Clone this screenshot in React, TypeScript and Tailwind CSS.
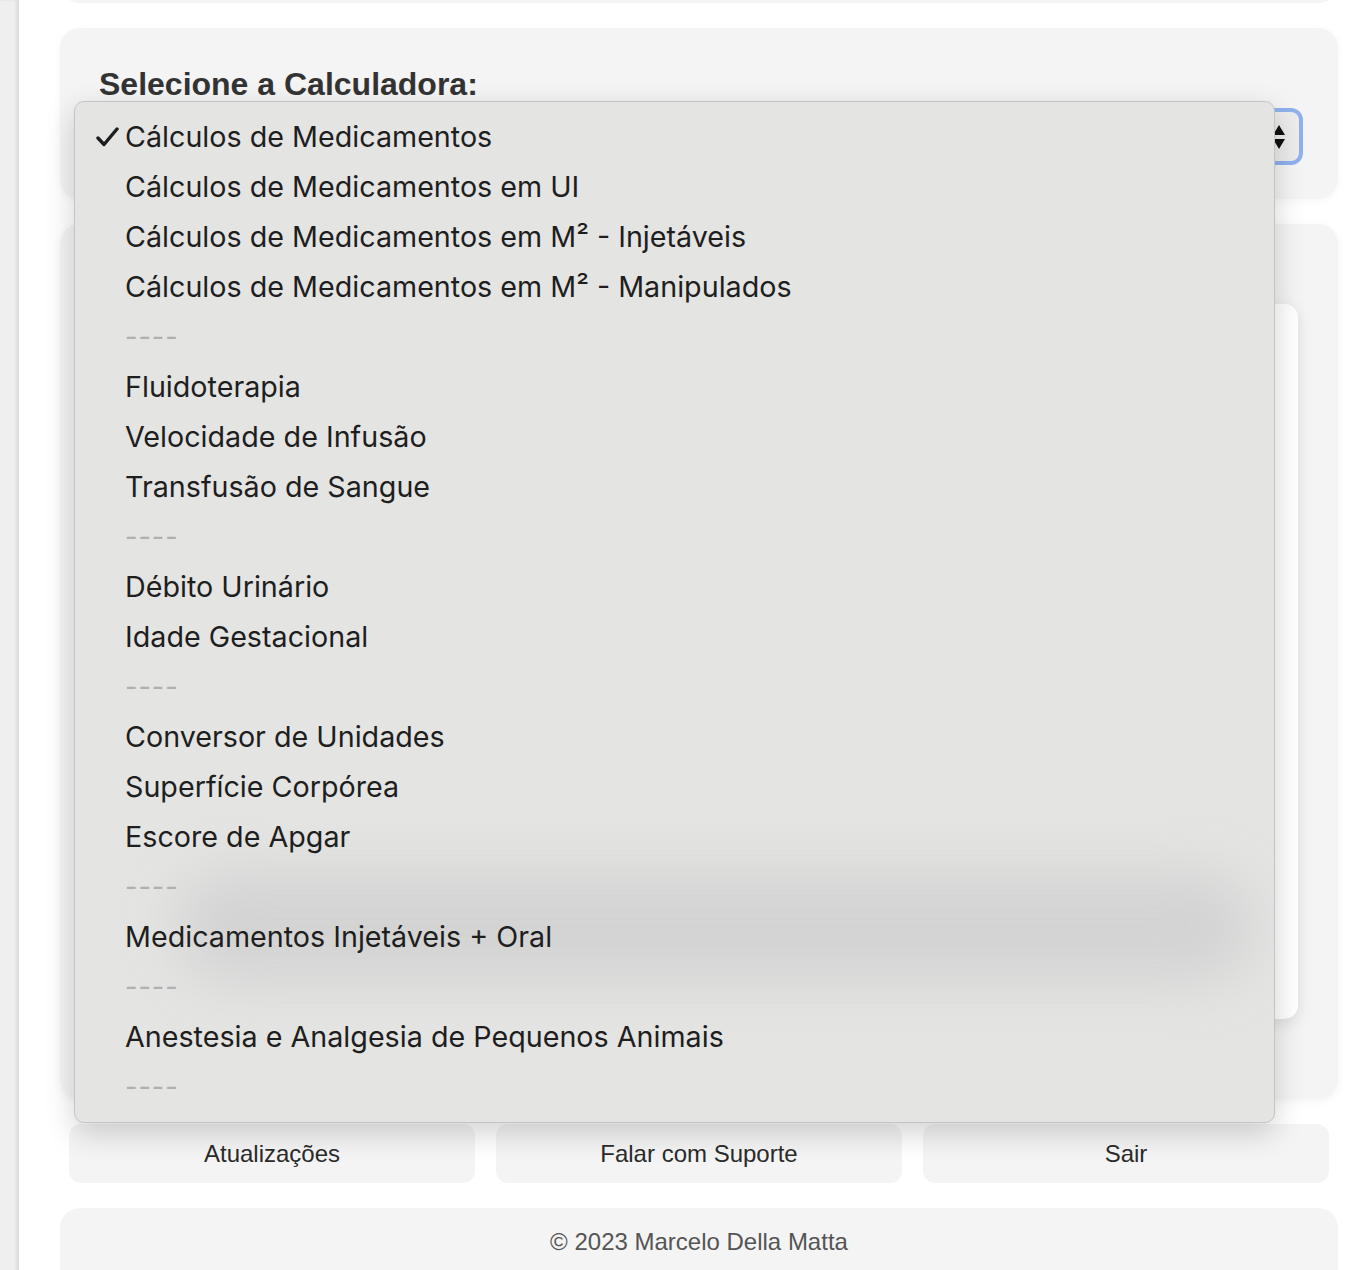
const groups: string[][] = [
  [
    "Cálculos de Medicamentos",
    "Cálculos de Medicamentos em UI",
    "Cálculos de Medicamentos em M² - Injetáveis",
    "Cálculos de Medicamentos em M² - Manipulados",
  ],
  ["Fluidoterapia", "Velocidade de Infusão", "Transfusão de Sangue"],
  ["Débito Urinário", "Idade Gestacional"],
  ["Conversor de Unidades", "Superfície Corpórea", "Escore de Apgar"],
  ["Medicamentos Injetáveis + Oral"],
  ["Anestesia e Analgesia de Pequenos Animais"],
];

const SelectMenu = () => {
  return (
    <div className="absolute left-[74px] top-[101px] w-[1201px] h-[1022px] rounded-[10px] bg-[#e4e4e3] border border-[#c4c4c4] shadow-[0_10px_30px_rgba(0,0,0,0.18)] overflow-hidden py-[10px] font-['Inter','Noto_Sans',sans-serif] text-[28.7px] text-[#1e1e1e]">
      <div className="absolute left-[100px] top-[770px] w-[1080px] h-[110px] rounded-full bg-[#cfcfcf] blur-[28px] opacity-80" />
      <div className="relative">
        {groups.map((g, gi) => (
          <div key={gi}>
            {g.map((item, i) => (
              <div key={item} className="h-[50px] flex items-center">
                <span className="w-[50px] flex justify-end pr-[6px]">
                  {gi === 0 && i === 0 && (
                    <svg width="23" height="20" viewBox="0 0 23 20">
                      <path
                        d="M2 11 L8 17.5 L21 2"
                        fill="none"
                        stroke="#1e1e1e"
                        strokeWidth="3.4"
                        strokeLinecap="round"
                        strokeLinejoin="round"
                      />
                    </svg>
                  )}
                </span>
                <span>{item}</span>
              </div>
            ))}
            <div className="h-[50px] flex items-center pl-[50px] text-[27px] text-[#b0b0b0] tracking-[1px]">
              ----
            </div>
          </div>
        ))}
      </div>
    </div>
  );
};

const App = () => {
  return (
    <div className="relative flex min-h-[1270px] bg-white overflow-hidden font-['Liberation_Sans',Arial,sans-serif]">
      <div className="w-[19px] shrink-0 bg-[#efefef] shadow-[inset_-3px_0_3px_rgba(0,0,0,0.08)]" />
      <div className="flex-1 pl-[41px] pr-[34px] flex flex-col">
        <div className="h-[3px] -mt-[20px] pt-[20px] box-content rounded-b-[20px] bg-[#f4f4f4]" />

        <div className="mt-[25px] h-[171px] rounded-[20px] bg-[#f4f4f4] shadow-[0_2px_8px_rgba(0,0,0,0.04)] px-[39px] pt-[37px]">
          <h2 className="text-[32px] font-bold text-[#333] leading-[38px]">
            Selecione a Calculadora:
          </h2>
          <div className="mt-[5px] h-[57px] mr-[-4px] rounded-[12px] border-[4px] border-[#8fb1ee] bg-[#ececec] flex items-center justify-end pr-[13px]">
            <svg width="14" height="28" viewBox="0 0 14 28">
              <path d="M7 2 L13 12 L1 12 Z" fill="#111" />
              <path d="M1 16 L13 16 L7 26 Z" fill="#111" />
            </svg>
          </div>
        </div>

        <div className="mt-[25px] h-[875px] rounded-[20px] bg-[#f4f4f4] shadow-[0_2px_10px_rgba(0,0,0,0.05)] px-[40px] pt-[80px]">
          <div className="h-[715px] rounded-[14px] bg-white shadow-[0_4px_16px_rgba(0,0,0,0.10)]" />
        </div>

        <div className="mt-[25px] px-[9px] grid grid-cols-3 gap-[21px]">
          {["Atualizações", "Falar com Suporte", "Sair"].map((b) => (
            <button
              key={b}
              className="h-[59px] rounded-[12px] bg-[#f4f4f4] text-[24px] text-[#2b2b2b]"
            >
              {b}
            </button>
          ))}
        </div>

        <div className="mt-[25px] h-[90px] rounded-t-[20px] bg-[#f4f4f4] flex justify-center pt-[16px] text-[24px] text-[#555]">
          © 2023 Marcelo Della Matta
        </div>
      </div>

      <SelectMenu />
    </div>
  );
};

export default App;
